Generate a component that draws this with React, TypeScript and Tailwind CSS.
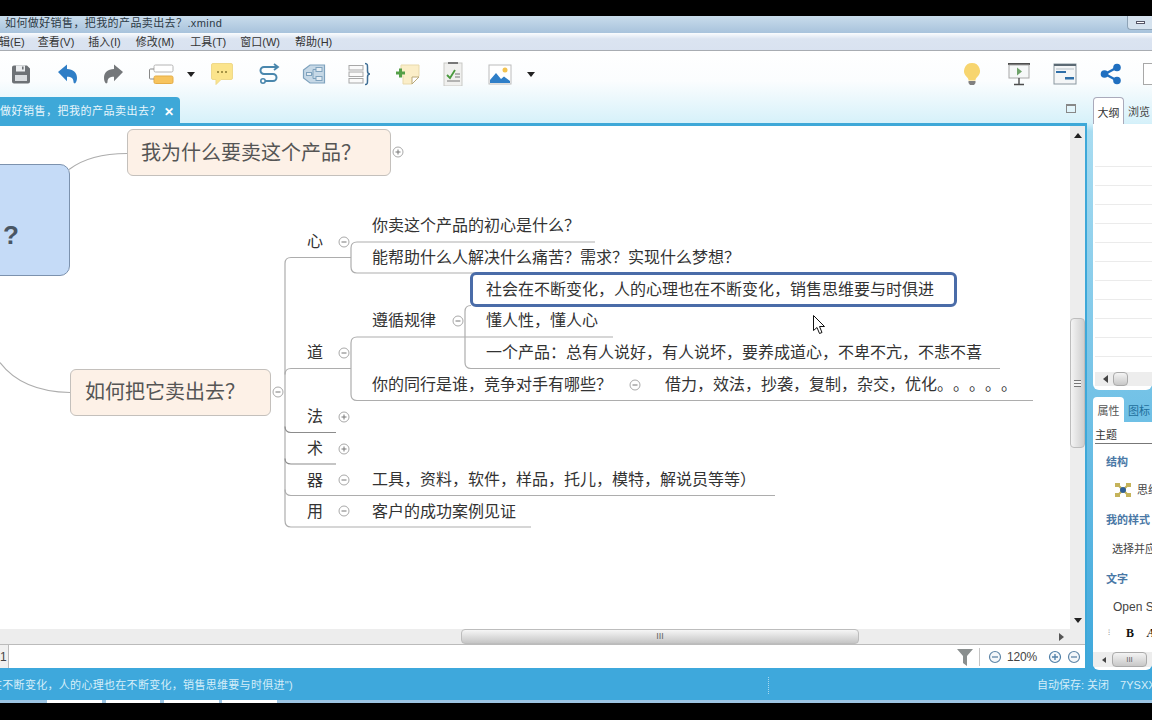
import React from "react";

const Fold = ({ className, plus }: { className: string; plus?: boolean }) => (
  <svg viewBox="0 0 12 12" className={`absolute h-3 w-3 ${className}`}>
    <circle cx="6" cy="6" r="5" fill="#fff" stroke="#a9a9a9" />
    <path d={plus ? "M3.5 6h5M6 3.5v5" : "M3.5 6h5"} stroke="#777" fill="none" />
  </svg>
);

const Label = ({ className, children }: { className: string; children: React.ReactNode }) => (
  <div className={`absolute whitespace-nowrap text-[16px] leading-5 text-[#333] ${className}`}>{children}</div>
);

const Caret = ({ className }: { className: string }) => (
  <svg viewBox="0 0 8 5" className={`h-[5px] w-2 shrink-0 ${className}`}>
    <path d="M0 0h8L4 5z" fill="#222" />
  </svg>
);

const Circle = ({ plus, color = "#5f86a8" }: { plus?: boolean; color?: string }) => (
  <svg viewBox="0 0 14 14" className="h-3.5 w-3.5 shrink-0">
    <circle cx="7" cy="7" r="5.5" fill="#f4f7fa" stroke={color} strokeWidth="1.2" />
    <path d={plus ? "M4 7h6M7 4v6" : "M4 7h6"} stroke={color} strokeWidth="1.3" />
  </svg>
);

function Toolbar() {
  return (
    <div className="flex h-[46px] items-center pl-[9px]">
      {/* save */}
      <svg viewBox="0 0 24 24" className="h-6 w-6 shrink-0">
        <path d="M3 5.5a2 2 0 0 1 2-2h13l3 3v13a2 2 0 0 1-2 2H5a2 2 0 0 1-2-2z" fill="#6e7276" />
        <rect x="7" y="3.5" width="9" height="6" fill="#eceef0" />
        <rect x="13" y="4.5" width="1.6" height="3" fill="#6e7276" />
        <rect x="6" y="13" width="12" height="6" fill="#d9dcdf" />
      </svg>
      {/* undo */}
      <svg viewBox="0 0 24 24" className="ml-[23px] h-6 w-6 shrink-0">
        <path d="M2 10 11 2.5v4.600c6 .2 10 3.500 10 8.800 0 2.400-.8 4.200-2 5.600-1-.2-1.500-.6-1.500-1.500 0-3.500-2-5.200-6.500-5.200v4.400z" fill="#2f7ec6" />
      </svg>
      {/* redo */}
      <svg viewBox="0 0 24 24" className="ml-[21px] h-6 w-6 shrink-0">
        <path d="M22 10 13 2.500v4.600c-6.500 0-10 3.500-10 9 0 2.400.8 4.200 2 5.400 1-.2 1.500-.6 1.500-1.500 0-3.500 2-5.200 6.500-5.200v4.400z" fill="#74777a" />
      </svg>
      {/* topic */}
      <svg viewBox="0 0 26 24" className="ml-[23px] h-6 w-[26px] shrink-0">
        <rect x="6" y="3" width="19" height="7" rx="1.500" fill="#fff" stroke="#b4b4b4" />
        <rect x="6" y="14" width="19" height="7.500" rx="1.500" fill="#f7c45e" stroke="#e5ad47" />
        <path d="M6 7H2.500A1 1 0 0 0 1.500 8v8a1 1 0 0 0 1 1H6" fill="none" stroke="#888" />
      </svg>
      <Caret className="ml-[13px]" />
      {/* comment */}
      <svg viewBox="0 0 24 24" className="ml-[15px] h-6 w-6 shrink-0">
        <path d="M1.500 3a1.500 1.500 0 0 1 1.500-1.500h18A1.500 1.500 0 0 1 22.500 3v13a1.500 1.500 0 0 1-1.500 1.500H11l-5 5v-5H3A1.500 1.500 0 0 1 1.500 16z" fill="#fbe48c" stroke="#efd98a" />
        <circle cx="8" cy="10" r="1" fill="#8a7a30" />
        <circle cx="12" cy="10" r="1" fill="#8a7a30" />
        <circle cx="16" cy="10" r="1" fill="#8a7a30" />
      </svg>
      {/* relationship */}
      <svg viewBox="0 0 24 24" className="ml-[22px] h-6 w-6 shrink-0">
        <path d="M21 5H8a3.500 3.500 0 0 0 0 7h9a3.500 3.500 0 0 1 0 7H9" fill="none" stroke="#4a87ad" strokeWidth="2" />
        <path d="M18 2l4 3-4 3" fill="none" stroke="#4a87ad" strokeWidth="1.800" />
        <circle cx="7" cy="19" r="2.200" fill="#fff" stroke="#4a87ad" strokeWidth="1.600" />
      </svg>
      {/* boundary */}
      <svg viewBox="0 0 24 24" className="ml-[22px] h-6 w-6 shrink-0">
        <path d="M1.500 8 8 3h14.500v18H8l-6.500-5z" fill="#c6d8e6" stroke="#7fa2bd" strokeWidth="1.200" />
        <path d="M9.500 12H11m0 0V7.500h3M11 12v4.500h3" fill="none" stroke="#7fa2bd" />
        <rect x="14" y="5.500" width="6" height="4" fill="#e5edf3" stroke="#7fa2bd" />
        <rect x="14" y="14.500" width="6" height="4" fill="#e5edf3" stroke="#7fa2bd" />
        <rect x="4.500" y="10.500" width="5" height="3" fill="#e5edf3" stroke="#7fa2bd" />
      </svg>
      {/* summary */}
      <svg viewBox="0 0 24 24" className="ml-[22px] h-6 w-6 shrink-0">
        <rect x="1" y="3.500" width="14" height="4.500" fill="#fafafa" stroke="#a8a8a8" />
        <rect x="1" y="10" width="14" height="4.500" fill="#fafafa" stroke="#a8a8a8" />
        <rect x="1" y="16.500" width="14" height="4.500" fill="#fafafa" stroke="#a8a8a8" />
        <path d="M17 1.500c2.500 0 2.500 1.500 2.500 4v3.500c0 2 .7 3 2.500 3-1.800 0-2.500 1-2.500 3v3.500c0 2.500 0 4-2.500 4" fill="none" stroke="#3f6f96" strokeWidth="1.500" />
      </svg>
      {/* note */}
      <svg viewBox="0 0 24 24" className="ml-6 h-6 w-6 shrink-0">
        <path d="M5 3h18v11l-7 8H7V14H5z" fill="#fbeec8" stroke="#e8d9ab" />
        <path d="M16 22v-7h7z" fill="#fff" stroke="#b9a878" />
        <path d="M4.500 6.500v9M0 11h9" stroke="#55a048" strokeWidth="3" />
      </svg>
      {/* task */}
      <svg viewBox="0 0 24 24" className="ml-[21px] h-6 w-6 shrink-0">
        <rect x="3" y="1" width="18" height="23" fill="#f0f0ee" stroke="#c9c9c5" />
        <rect x="7" y="0" width="10" height="2" fill="#777" />
        <path d="M6 13l3 3 5-8" fill="none" stroke="#4a9a3e" strokeWidth="1.800" />
        <path d="M14 12h5M14 15h5M6 19h13" stroke="#777" />
      </svg>
      {/* image */}
      <svg viewBox="0 0 24 24" className="ml-[23px] h-6 w-6 shrink-0">
        <rect x="1" y="3" width="22" height="19" fill="#fff" stroke="#bcbcbc" />
        <circle cx="17" cy="8" r="2.500" fill="#f3c350" />
        <path d="M2 21v-3l6-7 5 6 3-2.500 6 4.500v2z" fill="#2f7fc8" />
      </svg>
      <Caret className="ml-[15px]" />
      <div className="ml-auto flex items-center">
        {/* idea */}
        <svg viewBox="0 0 24 24" className="h-6 w-6 shrink-0">
          <path d="M12 1a8 8 0 0 0-5 14.200c1 .9 1.500 2 1.500 3.300h7c0-1.300.5-2.400 1.500-3.300A8 8 0 0 0 12 1z" fill="#f7d56f" />
          <path d="M8.500 19h7v2l-1.500 2h-4l-1.500-2z" fill="#808080" />
        </svg>
        {/* presentation */}
        <svg viewBox="0 0 24 24" className="ml-[23px] h-6 w-6 shrink-0">
          <rect x="1" y="1" width="22" height="2" fill="#4d4d4d" />
          <rect x="2" y="3" width="20" height="13" fill="#f6f8f8" stroke="#a8a8a8" />
          <path d="M10 5.500l5 4-5 4z" fill="#6fa36a" />
          <path d="M12 16v6M7 22.500h10" stroke="#4d4d4d" strokeWidth="1.400" />
        </svg>
        {/* gantt */}
        <svg viewBox="0 0 24 24" className="ml-[22px] h-6 w-6 shrink-0">
          <rect x="1" y="2" width="22" height="20" fill="#f4f6f7" stroke="#8a97a0" />
          <rect x="1" y="2" width="22" height="2" fill="#5c6a74" />
          <rect x="3" y="9" width="10" height="2" fill="#2f6fa8" />
          <rect x="12" y="15" width="9" height="2.500" fill="#2f6fa8" />
          <path d="M3 7h18" stroke="#b8c2c9" />
        </svg>
        {/* share */}
        <svg viewBox="0 0 24 24" className="ml-[22px] h-6 w-6 shrink-0">
          <path d="M18 5.500 6 12l12 6.500" fill="none" stroke="#1f6fc0" strokeWidth="2.400" />
          <circle cx="18" cy="5.500" r="3.800" fill="#1f6fc0" />
          <circle cx="5.500" cy="12" r="3.800" fill="#1f6fc0" />
          <circle cx="18" cy="18.500" r="3.800" fill="#1f6fc0" />
        </svg>
        <div className="ml-5 h-[22px] w-[9px] border-y border-l border-[#a8a8a8] bg-white" />
      </div>
    </div>
  );
}

function MapCanvas() {
  return (
    <div className="relative flex-1 overflow-hidden bg-white [text-spacing-trim:space-all]">
      <svg viewBox="0 126 1070 502" className="absolute left-0 top-0 h-full w-full" fill="none" stroke="#adadad" strokeWidth="1.200">
        <path d="M69 169Q90 153 127 153" />
        <path d="M0 362Q22 391 70 392" />
        <path d="M351 257H291Q285 257 285 263V520Q285 526.500 291 526.500H531" />
        <path d="M285 374Q285 368 291 368H351" />
        <path d="M595 241.500H357Q351 241.500 351 247.500V266.500Q351 272.500 357 272.500H745" />
        <path d="M613 336.500H357Q351 336.500 351 342.500V394Q351 400 357 400H1033" />
        <path d="M471 305Q465 305 465 311V362Q465 368 471 368H1000" />
        <path d="M285 426Q285 432 291 432H336" stroke="#8c8c8c" />
        <path d="M285 458Q285 463.500 291 463.500H336" stroke="#8c8c8c" />
        <path d="M285 489Q285 495 291 495H775" />
      </svg>

      {/* root topic, cut off by the left edge */}
      <div className="absolute left-[-30px] top-[38px] flex h-[112px] w-[100px] items-center rounded-[10px] border border-[#7c92ae] bg-[#c5dbf7] pl-[32px] pt-[30px] text-[26px] font-bold text-[#4a5664]">
        ?
      </div>

      <div className="absolute left-[127px] top-[3px] flex h-[47px] w-[264px] items-center rounded-md border-[1.5px] border-[#c4c0bc] bg-[#fdf1e7] pl-[13px] text-[20px] text-[#555]">
        我为什么要卖这个产品？
      </div>
      <Fold plus className="left-[392px] top-5" />

      <div className="absolute left-[70px] top-[243px] flex h-[47px] w-[201px] items-center rounded-md border-[1.5px] border-[#c4c0bc] bg-[#fdf1e7] pb-[2px] pl-[14px] text-[20px] text-[#555]">
        如何把它卖出去？
      </div>
      <Fold className="left-[272px] top-[260px]" />

      <Label className="left-[307px] top-[106px]">心</Label>
      <Fold className="left-[338px] top-[110px]" />
      <Label className="left-[307px] top-[217px]">道</Label>
      <Fold className="left-[338px] top-[221px]" />
      <Label className="left-[307px] top-[281px]">法</Label>
      <Fold plus className="left-[338px] top-[285px]" />
      <Label className="left-[307px] top-[313px]">术</Label>
      <Fold plus className="left-[338px] top-[317px]" />
      <Label className="left-[307px] top-[345px]">器</Label>
      <Fold className="left-[338px] top-[348px]" />
      <Label className="left-[307px] top-[376px]">用</Label>
      <Fold className="left-[338px] top-[379px]" />

      <Label className="left-[372px] top-[90px]">你卖这个产品的初心是什么？</Label>
      <Label className="left-[372px] top-[122px]">能帮助什么人解决什么痛苦？需求？实现什么梦想？</Label>
      <Label className="left-[372px] top-[185px]">遵循规律</Label>
      <Fold className="left-[452px] top-[189px]" />

      <div className="absolute left-[470px] top-[146px] flex h-[35px] w-[487px] items-center rounded-md border-[3px] border-[#4a6ca8] bg-white pl-[13px] text-[16px] text-[#333]">
        社会在不断变化，人的心理也在不断变化，销售思维要与时俱进
      </div>
      <Label className="left-[486px] top-[185px]">懂人性，懂人心</Label>
      <Label className="left-[486px] top-[217px]">一个产品：总有人说好，有人说坏，要养成道心，不卑不亢，不悲不喜</Label>
      <Label className="left-[372px] top-[249px]">你的同行是谁，竞争对手有哪些？</Label>
      <Fold className="left-[629px] top-[253px]" />
      <Label className="left-[665px] top-[249px]">借力，效法，抄袭，复制，杂交，优化。。。。。</Label>
      <Label className="left-[372px] top-[344px]">工具，资料，软件，样品，托儿，模特，解说员等等）</Label>
      <Label className="left-[372px] top-[376px]">客户的成功案例见证</Label>

      {/* mouse pointer */}
      <svg viewBox="0 0 13 19" className="absolute left-[813px] top-[189px] h-[19px] w-[13px]">
        <path d="M.5.5v15l3.500-3 2.500 6 2.500-1-2.500-6h5z" fill="#fff" stroke="#111" />
      </svg>
    </div>
  );
}

function VerticalScrollbar() {
  return (
    <div className="relative w-[15px] shrink-0 bg-[#ededed]">
      <Caret className="absolute left-[4px] top-[7px] rotate-180" />
      <div className="absolute left-0 top-[192px] flex h-[130px] w-full items-center justify-center rounded-sm border border-[#bdbdbd] bg-gradient-to-r from-[#f4f4f4] to-[#cfcfcf]">
        <div className="h-[7px] w-[7px] border-y border-[#777] bg-[linear-gradient(#f4f4f4_40%,#777_40%,#777_60%,#f4f4f4_60%)]" />
      </div>
      <Caret className="absolute bottom-[6px] left-[4px]" />
    </div>
  );
}

function HorizontalScrollbar() {
  return (
    <div className="relative h-[16px] shrink-0 border-b border-[#bbb] bg-[#ededed]">
      <div className="absolute left-[461px] top-0 flex h-[15px] w-[398px] items-center justify-center rounded-sm border border-[#bdbdbd] bg-gradient-to-b from-[#f6f6f6] to-[#c6c6c6] text-[9px] leading-none text-[#666]">
        III
      </div>
      <span className="absolute left-[1059px] top-[4px] h-0 w-0 border-y-4 border-l-[5px] border-y-transparent border-l-[#555]" />
    </div>
  );
}

function BottomBar() {
  return (
    <div className="flex h-[23px] shrink-0 items-center bg-white text-[12px] text-[#444]">
      <div className="flex h-full w-[9px] items-center border-r border-[#bbb] bg-[#f0f0f0]">1</div>
      <svg viewBox="0 0 16 18" className="ml-[948px] h-[18px] w-4 shrink-0">
        <path d="M0 1h16L10 8v10L6 15V8z" fill="#8a8f8f" />
      </svg>
      <div className="ml-[6px] h-[18px] w-px bg-[#c5c5c5]" />
      <div className="ml-2"><Circle /></div>
      <span className="ml-[5px] w-[40px] tracking-[-0.2px]">120%</span>
      <div className="ml-[1px]"><Circle plus color="#4f7fa8" /></div>
      <div className="ml-[5px]"><Circle /></div>
    </div>
  );
}

function SidePanels() {
  return (
    <div className="relative z-10 ml-[6px] w-[59px] shrink-0 text-[11px]">
      <div className="flex h-[27px]">
        <div className="flex h-[28px] w-[31px] items-center justify-center rounded-t border border-b-0 border-[#aab] bg-white pt-[3px] text-[#333]">大纲</div>
        <div className="ml-1 flex items-center whitespace-nowrap pt-[3px] text-[#444]">浏览</div>
      </div>
      <div className="relative h-[266px] overflow-hidden rounded-b-md bg-white">
        <div className="flex flex-col pt-[42px] pl-[2px]">
          {[0, 1, 2, 3, 4, 5, 6, 7, 8, 9, 10].map((i) => (
            <div key={i} className="h-[19px] border-t border-[#ebebeb]" />
          ))}
        </div>
        <div className="absolute bottom-[4px] left-[2px] flex h-[14px] w-full items-center bg-[#ededed] pl-2">
          <span className="h-0 w-0 border-y-4 border-r-[5px] border-y-transparent border-r-[#444]" />
          <div className="ml-[5px] h-[14px] w-[15px] rounded-sm border border-[#aaa] bg-gradient-to-b from-[#f4f4f4] to-[#c8c8c8]" />
        </div>
      </div>
      <div className="mt-[7px] flex h-[25px]">
        <div className="flex w-[31px] items-center justify-center rounded-t bg-white pt-[3px] text-[#555]">属性</div>
        <div className="ml-1 flex items-center whitespace-nowrap pt-[3px] text-[#1f6f9c]">图标</div>
      </div>
      <div className="h-[248px] overflow-hidden rounded-b-md bg-white">
        <div className="ml-[2px] mt-[7px] h-[15px] border-b border-[#777] leading-[13px] text-[#333]">主题</div>
        <div className="ml-[13px] mt-[10px] font-semibold leading-4 text-[#4a78a6]">结构</div>
        <div className="ml-[21px] mt-[11px] flex h-[18px] items-center gap-[5px] whitespace-nowrap text-[#444]">
          <svg viewBox="0 0 18 18" className="h-[18px] w-[18px] shrink-0">
            <path d="M4 4l10 10M14 4L4 14" stroke="#c5b35a" strokeWidth="2" />
            <rect x="1" y="2" width="5" height="4" fill="#c5b35a" />
            <rect x="12" y="2" width="5" height="4" fill="#c5b35a" />
            <rect x="1" y="12" width="5" height="4" fill="#c5b35a" />
            <rect x="12" y="12" width="5" height="4" fill="#c5b35a" />
            <circle cx="9" cy="9" r="3" fill="#2f5f96" />
          </svg>
          思维
        </div>
        <div className="ml-[13px] mt-[13px] whitespace-nowrap font-semibold leading-4 text-[#4a78a6]">我的样式</div>
        <div className="ml-[19px] mt-[13px] whitespace-nowrap leading-4 text-[#444]">选择并应用</div>
        <div className="ml-[13px] mt-[14px] font-semibold leading-4 text-[#4a78a6]">文字</div>
        <div className="ml-5 mt-3 whitespace-nowrap text-[12px] leading-4 text-[#444]">Open Sans</div>
        <div className="relative mt-[10px] flex h-4 items-center whitespace-nowrap font-['Liberation_Serif',serif] text-[12px] font-bold text-[#111]">
          <span className="ml-[15px] text-[8px] font-normal text-[#888]">⁝</span>
          <span className="ml-[16px]">B</span>
          <span className="ml-[13px] italic">A</span>
        </div>
        <div className="mt-[11px] flex h-[15px] items-center bg-[#ededed] pl-[9px]">
          <span className="h-0 w-0 border-y-[3px] border-r-[4px] border-y-transparent border-r-[#444]" />
          <div className="ml-[6px] flex h-[15px] w-[35px] items-center justify-center rounded-sm border border-[#aaa] bg-gradient-to-b from-[#f4f4f4] to-[#c8c8c8] text-[8px] text-[#666]">III</div>
        </div>
      </div>
    </div>
  );
}

export default function App() {
  return (
    <div className="flex h-[720px] w-[1152px] flex-col overflow-hidden bg-black font-['Liberation_Sans','Noto_Sans_CJK_SC',sans-serif] text-[#333]">
      <div className="h-4 shrink-0 bg-black" />

      {/* window title */}
      <div className="flex h-[17px] shrink-0 items-center bg-gradient-to-b from-[#c9dcec] to-[#a8c3dc] pb-[2px] pl-[5px] text-[11px] tracking-[0.4px] text-[#2d3a46] [text-spacing-trim:space-all]">
        如何做好销售，把我的产品卖出去？.xmind
        <div className="ml-auto flex h-[14px] w-[25px] items-center justify-center self-start rounded-bl border-b border-l border-[#8ea3b6] bg-[#d5e2ee]">
          <div className="h-[3px] w-[9px] border border-[#556] bg-white" />
        </div>
      </div>

      {/* menu */}
      <div className="flex h-[18px] shrink-0 items-end border-b border-[#a8acb2] bg-[linear-gradient(#fafcfe_0%,#dbe4f1_35%,#d9e2f0_100%)] pb-[1px] text-[11px] leading-[14px] text-[#333]">
        <span className="-ml-px">辑(E)</span>
        <span className="ml-[13px]">查看(V)</span>
        <span className="ml-[14px]">插入(I)</span>
        <span className="ml-[15px]">修改(M)</span>
        <span className="ml-4">工具(T)</span>
        <span className="ml-[14px]">窗口(W)</span>
        <span className="ml-[15px]">帮助(H)</span>
      </div>

      <div className="flex h-[617px] shrink-0 flex-col bg-[linear-gradient(#ffffff_0px,#fbfdfe_30px,#d6f1fa_72px,#a8dcf1_80px,#3ea8dc_617px)]">
        <Toolbar />
        <div className="flex min-h-0 flex-1">
          <div className="flex w-[1087px] shrink-0 flex-col">
            {/* editor tab */}
            <div className="flex h-[26px] shrink-0 items-center">
              <div className="flex h-full w-[180px] items-center justify-between overflow-hidden rounded-tr bg-[#3ea8d8] pr-[6px] pt-[3px] text-[11px] tracking-[0.5px] text-[#e8f6fc] [text-spacing-trim:space-all]">
                <span className="whitespace-nowrap">做好销售，把我的产品卖出去？</span>
                <span className="text-[12px] font-bold leading-none text-white">✕</span>
              </div>
              <div className="ml-auto mr-[11px] mb-[3px] h-[9px] w-[10px] border border-t-2 border-[#888]" />
            </div>
            <div className="flex min-h-0 flex-1 flex-col border-r-2 border-t-[3px] border-[#3ea8d8]">
              <div className="flex min-h-0 flex-1">
                <MapCanvas />
                <VerticalScrollbar />
              </div>
              <HorizontalScrollbar />
              <BottomBar />
            </div>
          </div>
          <SidePanels />
        </div>
      </div>

      {/* status bar */}
      <div className="relative flex h-8 shrink-0 items-center overflow-hidden bg-[#3ea8dc] pt-[3px] text-[11px] text-[#d5eef9]">
        <span className="-ml-[9px] whitespace-nowrap tracking-[0.3px] [text-spacing-trim:space-all]">在不断变化，人的心理也在不断变化，销售思维要与时俱进")</span>
        <div className="ml-[475px] h-[17px] border-l border-dotted border-[#a5d8f0]" />
        <span className="ml-[268px] whitespace-nowrap">自动保存: 关闭</span>
        <span className="ml-[5px] h-[5px] w-[5px] rounded-full bg-[#cfe6f2]" />
        <span className="ml-[6px] whitespace-nowrap">7YSXXX</span>
      </div>

      {/* taskbar strip */}
      <div className="flex h-[3px] shrink-0 bg-[#9cc4e2] pl-[47px]">
        <div className="h-full w-[55px] bg-white" />
        <div className="ml-1 h-full w-[54px] bg-white" />
        <div className="ml-1 h-full w-[55px] bg-white" />
        <div className="ml-[3px] h-full w-[55px] bg-white" />
      </div>
    </div>
  );
}
